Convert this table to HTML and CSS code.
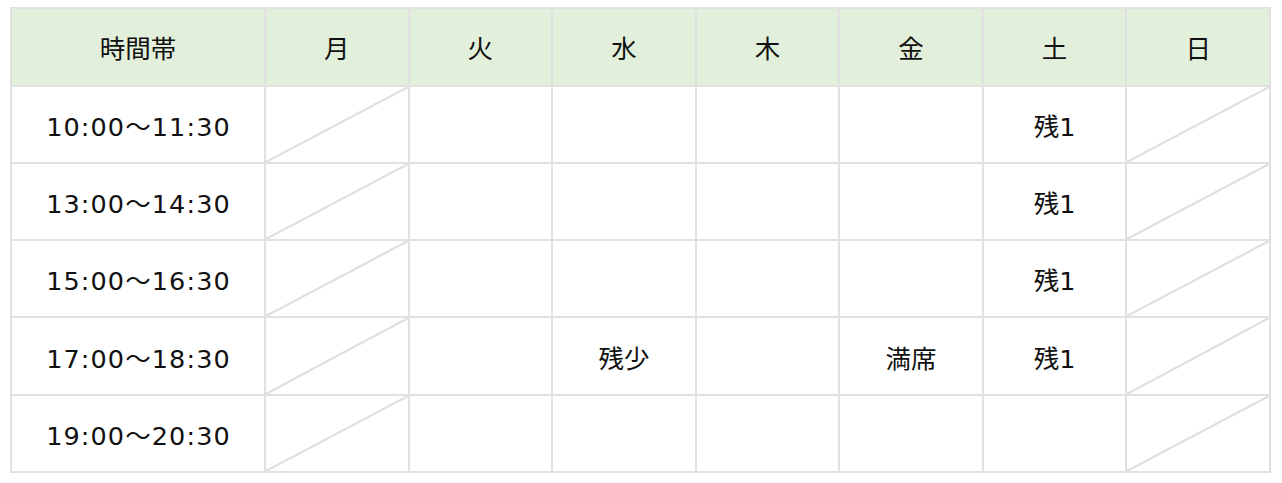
FILE: index.html
```html
<!DOCTYPE html>
<html lang="ja">
<head>
<meta charset="utf-8">
<title>時間帯</title>
<link rel="stylesheet" href="styles.css">
</head>
<body>
<div class="wrap">
<table class="schedule">
  <colgroup>
    <col class="col-time">
    <col><col><col><col><col><col><col>
  </colgroup>
  <thead>
    <tr>
      <th>時間帯</th><th>月</th><th>火</th><th>水</th><th>木</th><th>金</th><th>土</th><th>日</th>
    </tr>
  </thead>
  <tbody>
    <tr>
      <td class="time">10:00～11:30</td><td class="off"></td><td></td><td></td><td></td><td></td><td>残1</td><td class="off"></td>
    </tr>
    <tr>
      <td class="time">13:00～14:30</td><td class="off"></td><td></td><td></td><td></td><td></td><td>残1</td><td class="off"></td>
    </tr>
    <tr>
      <td class="time">15:00～16:30</td><td class="off"></td><td></td><td></td><td></td><td></td><td>残1</td><td class="off"></td>
    </tr>
    <tr>
      <td class="time">17:00～18:30</td><td class="off"></td><td></td><td>残少</td><td></td><td>満席</td><td>残1</td><td class="off"></td>
    </tr>
    <tr>
      <td class="time">19:00～20:30</td><td class="off"></td><td></td><td></td><td></td><td></td><td></td><td class="off"></td>
    </tr>
  </tbody>
</table>
</div>
</body>
</html>
```

FILE: styles.css
```css
html, body {
  margin: 0;
  padding: 0;
  background: #ffffff;
}

.wrap {
  padding: 7px 10px 0 10px;
}

.schedule {
  border-collapse: collapse;
  table-layout: fixed;
  width: 1261px;
  font-family: "DejaVu Sans", "Noto Sans CJK JP", sans-serif;
  font-size: 25.5px;
  color: #111111;
}

.col-time {
  width: 254px;
}

.schedule th,
.schedule td {
  border: 2px solid #e1e1e1;
  text-align: center;
  vertical-align: middle;
  padding: 0;
  font-weight: normal;
}

.schedule td.time {
  letter-spacing: 1.1px;
  padding-left: 1px;
}

.schedule thead tr {
  height: 77.5px;
}

.schedule tbody tr {
  height: 77.3px;
}

.schedule th {
  background: #e2efda;
}

.schedule td.off {
  background: linear-gradient(to bottom right,
    transparent calc(50% - 1.3px),
    #e1e1e1 calc(50% - 1px),
    #e1e1e1 calc(50% + 1px),
    transparent calc(50% + 1.3px));
}
```
